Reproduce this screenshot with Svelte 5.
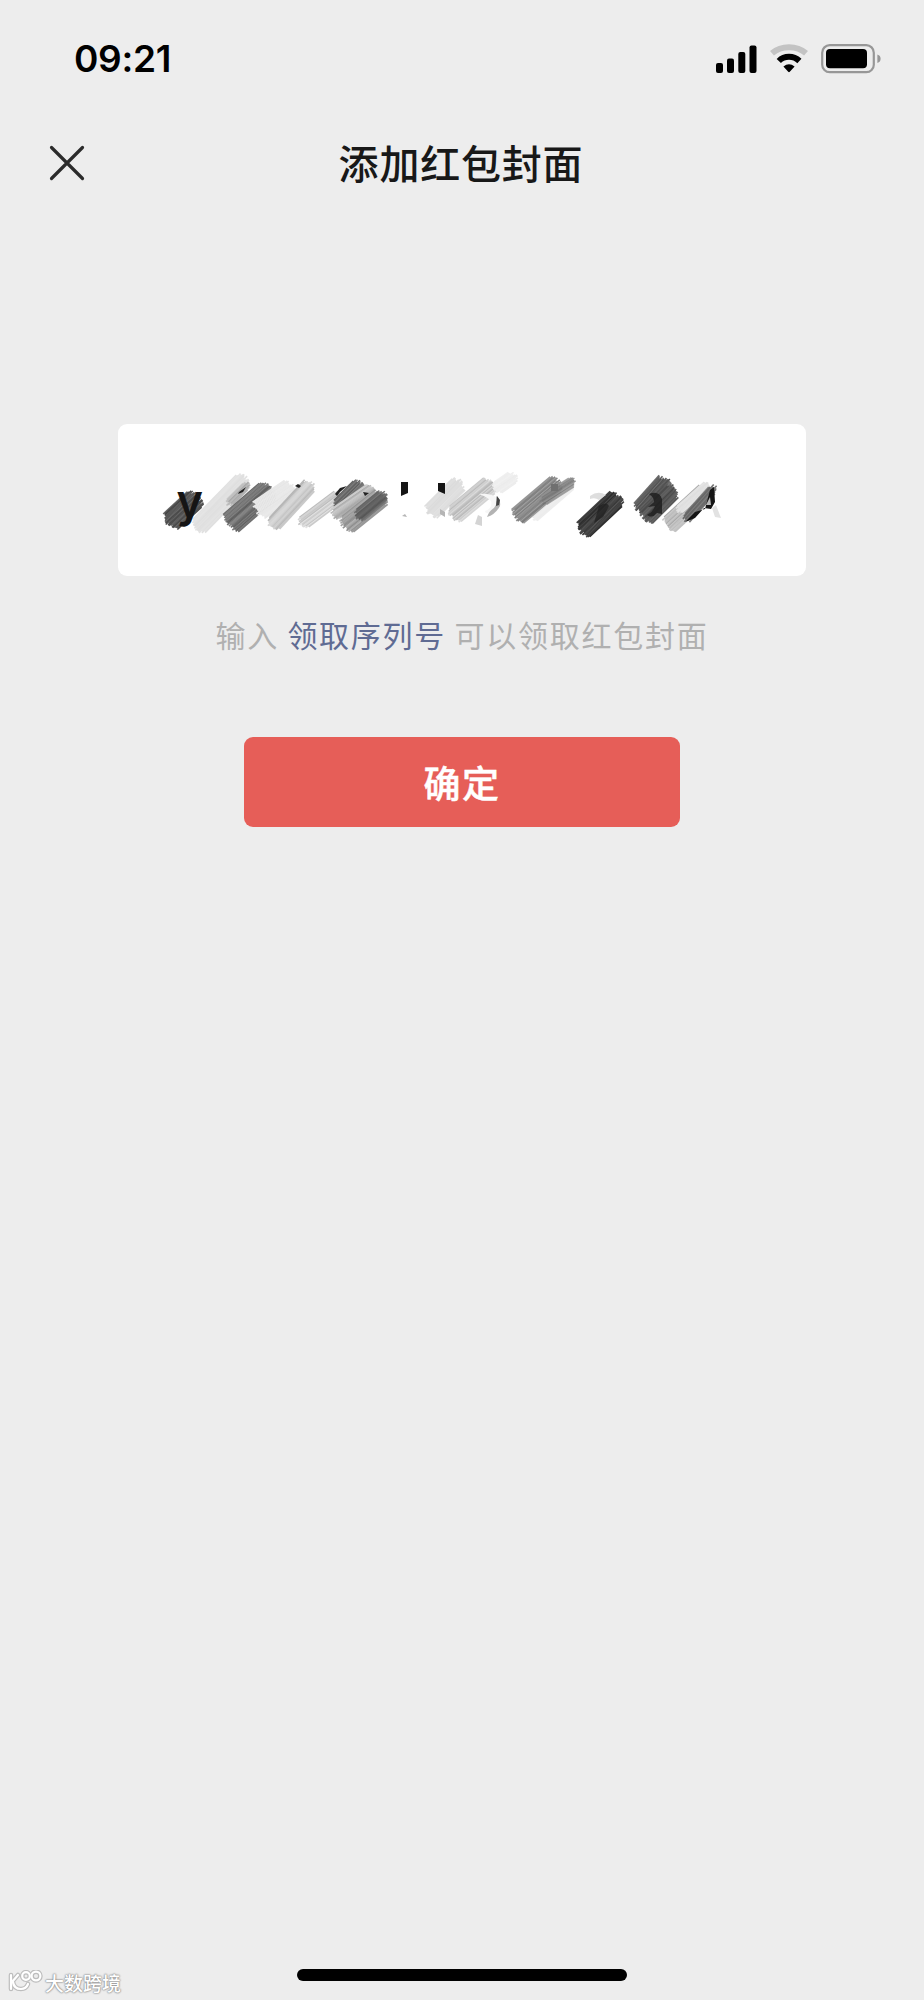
<script>
  const bars = [
    { x: 0, h: 10 },
    { x: 11, h: 14.5 },
    { x: 22.3, h: 21 },
    { x: 33.5, h: 27.5 },
  ];

  // brush marks that hide the serial number: from, to, width, grey level, opacity
  const marks = [
    [171, 522, 197, 498, 23, 84, 1],
    [199, 527, 245, 480, 20, 226, 1],
    [231, 502, 247, 486, 10, 170, 0.7],
    [232, 523, 270, 490, 25, 112, 1],
    [260, 510, 292, 488, 22, 232, 1],
    [274, 525, 311, 485, 17, 200, 1],
    [304, 523, 340, 496, 15, 208, 1],
    [340, 508, 362, 486, 20, 112, 1],
    [336, 514, 372, 489, 14, 190, 1],
    [347, 525, 382, 497, 22, 160, 1],
    [360, 516, 384, 496, 15, 100, 0.8],
    [432, 512, 460, 484, 19, 222, 1],
    [455, 515, 491, 485, 21, 202, 1],
    [498, 488, 514, 477, 15, 238, 1],
    [535, 516, 572, 484, 13, 236, 1],
    [519, 516, 558, 483, 20, 140, 1],
    [545, 500, 573, 482, 12, 135, 0.8],
    [584, 530, 618, 498, 21, 62, 1],
    [643, 511, 668, 483, 24, 92, 1],
    [647, 517, 673, 491, 20, 82, 0.9],
    [670, 525, 706, 492, 20, 182, 1],
    [681, 509, 707, 486, 10, 226, 1],
    [688, 518, 714, 489, 11, 110, 0.9],
  ];

  function noise(n) {
    const v = Math.sin(n * 127.1) * 43758.5453;
    return v - Math.floor(v);
  }

  // split every mark into thin parallel hairs with ragged ends
  const hairs = marks.flatMap(([x1, y1, x2, y2, w, grey, opacity], m) => {
    const len = Math.hypot(x2 - x1, y2 - y1);
    const ux = (x2 - x1) / len;
    const uy = (y2 - y1) / len;
    const count = Math.round(w / 1.1);
    return Array.from({ length: count }, (_, i) => {
      const seed = m * 40 + i + 1;
      const off = (i / (count - 1) - 0.5) * (w - 2);
      const round = 5 * Math.pow(off / (w / 2), 2);
      const a = 5 - round - noise(seed) * 4;
      const b = 5 - round - noise(seed + 900) * 4;
      const spread = grey > 215 ? 6 : 40;
      const g = Math.round(Math.min(246, Math.max(25, grey + (noise(seed + 300) - 0.5) * spread)));
      return {
        x1: x1 - ux * a - uy * off,
        y1: y1 - uy * a + ux * off,
        x2: x2 + ux * b - uy * off,
        y2: y2 + uy * b + ux * off,
        color: `rgb(${g}, ${g}, ${g})`,
        opacity,
      };
    });
  });
</script>

<div class="screen">
  <header class="status">
    <span class="time">09:21</span>
    <div class="indicators">
      <svg class="signal" width="41" height="28" viewBox="0 0 41 28">
        {#each bars as bar}
          <rect x={bar.x} y={28 - bar.h} width="7" height={bar.h} rx="2" />
        {/each}
      </svg>
      <svg class="wifi" width="38" height="29" viewBox="0 0 38 29" fill="none">
        <path d="M2 9.2Q9 3.2 19 3.2T36 9.2" stroke="#c3c3c3" stroke-width="6" />
        <path d="M8.8 17Q13 12.8 19 12.8T29.4 17" stroke="#000" stroke-width="6" />
        <path d="M13.4 22.6Q19 17.8 24.6 22.6L19.8 27.7Q19 28.6 18.2 27.7Z" fill="#000" />
      </svg>
      <svg class="battery" width="60" height="30" viewBox="0 0 60 30">
        <rect x="1.2" y="1.2" width="51.6" height="27" rx="7.5" fill="none" stroke="#979797" stroke-width="2.2" />
        <rect x="5" y="5" width="41" height="19.3" rx="4" />
        <path d="M56.4 10.6Q59.6 11.6 59.6 14.8T56.4 19Z" fill="#979797" />
      </svg>
    </div>
  </header>

  <nav class="navbar">
    <button class="close" aria-label="关闭">
      <svg width="36" height="36" viewBox="0 0 36 36">
        <path d="M2.5 2.5L33.5 33.5M33.5 2.5L2.5 33.5" stroke="#2b2b2b" stroke-width="3.2" stroke-linecap="round" />
      </svg>
    </button>
    <h1>添加红包封面</h1>
  </nav>

  <main>
    <div class="serial">
      <svg width="570" height="76" viewBox="160 466 570 76">
        {#each hairs as h}
          <line x1={h.x1} y1={h.y1} x2={h.x2} y2={h.y2} stroke={h.color} stroke-width="1.6" opacity={h.opacity} />
        {/each}
        <text x="177.5" y="517" class="letter">y</text>
        <!-- what is left visible of the other characters -->
        <path d="M402 482h7v11l-7 3zM439 483h7v11l-7-3z" fill="#151515" />
        <path d="M403 516l3-2 2 3M441 509l5 3v5l-5-3" fill="#b5b5b5" />
        <path d="M240 492l7-5-3 5-5 2zM296 486l3-2 3 2-2 2zM336 494l5-6 7-2-7 6-3 4zM364 492l6 1-4 3z" fill="#222" />
        <path d="M476 524l3-9 4 2v9z" fill="#d4d4d4" />
        <path d="M480 494q10-1 17 3q4 8-3 14q-8 4-8 0q8-3 6-10q-4-4-12-7z" fill="#f6f6f6" />
        <path d="M497 496q5 4 4 10q-5 9-13 11q2-6 7-9q4-5 2-12z" fill="#9a9a9a" opacity=".75" />
        <path d="M498 496l3 4-1 5-3 1z" fill="#444" />
        <path d="M591 496q8-6 16-1l-7 5q-4-3-9-1z" fill="#dedede" />
        <path d="M552 484h7v7h-7z" fill="#707070" />
        <path d="M600 506q8-5 10 0l-6 11-9 6z" fill="#202020" opacity=".75" />
        <path d="M650 494q10-4 13 5v15l-5-1q-5 6-10 2 6-3 8-9l-7 1 6-5q0-5-5-8z" fill="#1c1c1c" opacity=".8" />
        <path d="M686 522l10-10 10-3 5-19 4-3 1 15-4 7-7-1-9 10z" fill="#151515" />
        <path d="M707 505l4-8 1 8z" fill="#b8b8b8" />
        <path d="M713 508l4-3 5 13-6-1z" fill="#e2e2e2" />
      </svg>
    </div>
    <p class="hint">输入 <a href="#serial">领取序列号</a> 可以领取红包封面</p>
    <button class="confirm">确定</button>
  </main>

  <footer>
    <div class="home-bar"></div>
    <div class="watermark">
      <svg width="35" height="23" viewBox="0 0 35 23" fill="none" stroke-linecap="round">
        <g stroke="#bdbdbd" stroke-width="4.6">
          <path d="M3 5V19M10 5L4 12M5 12Q6 19 13 19Q18 19 20 14" />
          <circle cx="18" cy="6" r="3.8" />
          <circle cx="28" cy="6" r="4.4" />
        </g>
        <g stroke="#fff" stroke-width="2.2">
          <path d="M3 5V19M10 5L4 12M5 12Q6 19 13 19Q18 19 20 14" />
          <circle cx="18" cy="6" r="3.8" />
          <circle cx="28" cy="6" r="4.4" />
        </g>
      </svg>
      <span>大数跨境</span>
    </div>
  </footer>
</div>

<style>
  :global(body) {
    background: #ededed;
  }

  .screen {
    display: flex;
    flex-direction: column;
    height: 2000px;
    background: #ededed;
    font-family: "Noto Sans CJK SC", "Noto Sans", sans-serif;
    overflow: hidden;
  }

  svg {
    display: block;
  }

  .status {
    display: flex;
    justify-content: space-between;
    align-items: center;
    height: 117px;
    padding: 0 43px 0 74px;
    box-sizing: border-box;
  }

  .time {
    font-family: Inter, sans-serif;
    font-size: 37px;
    font-weight: 600;
    line-height: 1;
    letter-spacing: -0.3px;
    color: #000;
  }

  .indicators {
    display: flex;
    align-items: center;
  }

  .wifi {
    margin-left: 13px;
  }

  .battery {
    margin-left: 13px;
  }

  .navbar {
    display: grid;
    grid-template-columns: 120px 1fr 120px;
    align-items: center;
    height: 92px;
  }

  button {
    border: none;
    padding: 0;
    font-family: inherit;
    cursor: pointer;
  }

  .close {
    justify-self: start;
    margin-left: 49px;
    background: none;
  }

  h1 {
    margin: 0;
    padding: 0 2px 3px 0;
    font-size: 40px;
    font-weight: 500;
    line-height: 60px;
    letter-spacing: 0.8px;
    text-align: center;
    color: #181818;
  }

  main {
    flex: 1;
    display: flex;
    flex-direction: column;
    align-items: center;
    padding-top: 215px;
  }

  .serial {
    display: flex;
    align-items: center;
    width: 688px;
    height: 152px;
    padding-left: 41px;
    padding-top: 7px;
    box-sizing: border-box;
    border-radius: 9px;
    background: #fff;
  }

  .letter {
    font-family: Inter, sans-serif;
    font-size: 45px;
    font-weight: 600;
    fill: #151515;
  }

  .hint {
    margin: 36px 0 0;
    font-size: 30px;
    line-height: 44px;
    letter-spacing: 1.75px;
    color: #b0b0b0;
    white-space: nowrap;
  }

  .hint a {
    color: #5f6b93;
    text-decoration: none;
  }

  .confirm {
    width: 436px;
    height: 90px;
    margin-top: 81px;
    padding-bottom: 1px;
    border-radius: 9px;
    background: #e65e58;
    color: #fff;
    font-size: 37px;
    font-weight: 500;
    letter-spacing: 1.5px;
    -webkit-text-stroke: 0.5px #fff;
  }

  footer {
    display: grid;
    grid-template-columns: 1fr 330px 1fr;
    height: 34px;
  }

  .home-bar {
    grid-column: 2;
    grid-row: 1;
    height: 12px;
    margin-top: 3px;
    border-radius: 6px;
    background: #000;
  }

  .watermark {
    grid-column: 1;
    grid-row: 1;
    display: flex;
    align-items: flex-start;
    padding: 4px 0 0 8px;
  }

  .watermark span {
    margin-left: 2px;
    font-size: 19px;
    font-weight: 500;
    line-height: 26px;
    color: #fff;
    text-shadow: 0 0 2px #888, 0 0 2px #999, 0 0 1px #999;
  }
</style>
